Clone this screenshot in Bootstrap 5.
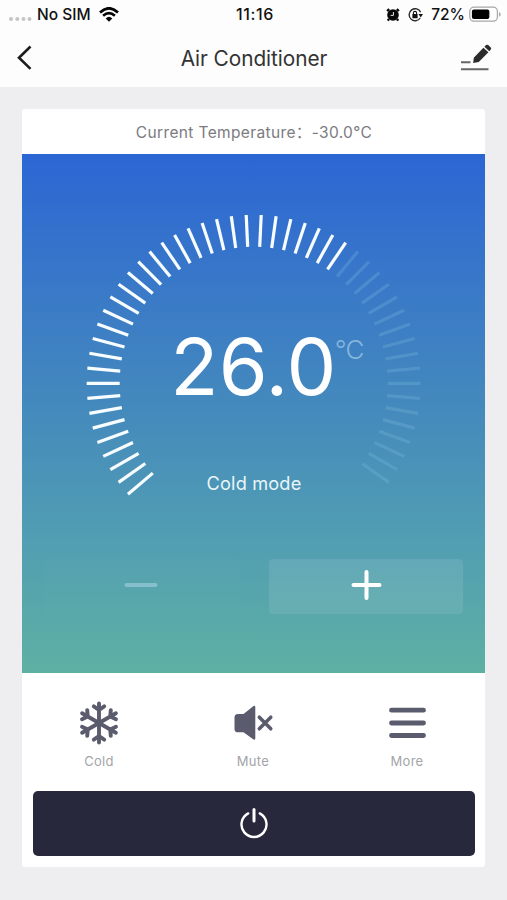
<!DOCTYPE html>
<html lang="en">
<head>
<meta charset="utf-8">
<meta name="viewport" content="width=device-width, initial-scale=1">
<title>Air Conditioner</title>
<link href="https://cdn.jsdelivr.net/npm/bootstrap@5.3.0/dist/css/bootstrap.min.css" rel="stylesheet">
<style>
body{font-family:Inter,"Noto Sans CJK SC",sans-serif;background:#eeeef0;height:900px;overflow:hidden;color:#111}
svg{display:block;flex:none}
.top-area{background:#fdfdfd;height:87px}
.status{height:29px;font-size:15.5px;font-weight:500;line-height:29px}
.status>div{flex:1 1 0}
.status-left{padding-left:9px}
.status-right{padding-right:6px}
.clock{letter-spacing:.6px;font-size:16px}
.title-bar{height:58px}
.title-text{font-size:20.8px;color:#333;line-height:59px;letter-spacing:-.05px;padding-left:1px}
.panel{margin:22px 22px 0;height:758px;width:463px;border-radius:3px;overflow:hidden}
.current{height:45px;font-size:15.5px;color:#7b7b80;line-height:47px;letter-spacing:.36px;padding-left:1px}
.screen{height:519px;background:linear-gradient(#2c66d4,#4489bd 48%,#529eb2 75%,#5eb0a3)}
.dial{display:grid;height:405px}
.dial>*{grid-area:1/1}
.reading{color:#fff;padding-top:165px}
.value{font-size:79px;line-height:95px;letter-spacing:.3px;font-weight:400}
.unit{font-size:26px;line-height:30px;color:#86b6de;margin:16px 0 0 -2px;font-weight:300;letter-spacing:-.6px}
.mode{font-size:18.2px;line-height:24px;color:#e9f5fa;margin-top:57px;letter-spacing:.15px;padding-left:1px}
.step-row{padding:0 22px;gap:30px}
.step{height:55px;border-radius:4px;border:0;padding-bottom:5px;background:rgba(255,255,255,.09)}
.step.dim{background:rgba(255,255,255,.012)}
.tools{height:118px;padding:28px 38px 0 37px}
.tool{width:80px;font-size:13px;color:#a3a4a9;line-height:18px;letter-spacing:.3px}
.tool svg{margin-bottom:7px}
.power{height:65px;width:442px;margin-left:11px;border:0;border-radius:5px;background:#28283d}
</style>
<script src="https://cdn.jsdelivr.net/npm/bootstrap@5.3.0/dist/js/bootstrap.bundle.min.js"></script>
</head>
<body>
<header class="top-area">
  <div class="status d-flex">
    <div class="status-left d-flex align-items-center">
      <svg width="24" height="29" fill="#c5c5c5"><circle cx="2" cy="19" r="2"/><circle cx="8.3" cy="19" r="2"/><circle cx="14.5" cy="19" r="2"/><circle cx="20.5" cy="19" r="2"/></svg>
      <span class="ms-1">No SIM</span>
      <svg class="ms-2" width="20" height="15" viewBox="0 0 20 15" fill="none" stroke="#050505" stroke-width="2.7"><path d="M1 5.4Q10-2.8 19 5.4M4.1 8.7Q10 3.7 15.9 8.7"/><path d="M6.7 11.4Q10 8.3 13.3 11.4L10 14.7Z" fill="#050505" stroke="none"/></svg>
    </div>
    <span class="clock">11:16</span>
    <div class="status-right d-flex align-items-center justify-content-end">
      <svg width="14" height="14" viewBox="0 0 14 14"><circle cx="7" cy="7" r="5.8" fill="#080808"/><path d="M1.200 3.200 3.200 1.200M12.800 3.200 10.800 1.200M3 11 1.800 12.600M11 11l1.200 1.600" stroke="#080808" stroke-width="2.400"/><path d="M7.400 4v3.400H4.600" fill="none" stroke="#fff" stroke-width=".9"/></svg>
      <svg class="mx-2" width="15" height="14" viewBox="0 0 15 14"><path d="M12.200 10A6 6 0 1 1 12.600 4.300" fill="none" stroke="#222" stroke-width="1.300"/><path d="M10.500 6H15L12.700 9.400Z" fill="#111"/><rect x="4.4" y="6.1" width="5.2" height="4.1" rx=".5" fill="#111"/><path d="M5.400 6.500V5a1.600 1.600 0 0 1 3.200 0v1.500" fill="none" stroke="#111" stroke-width="1.100"/></svg>
      <span>72%</span>
      <svg class="ms-1" width="32" height="17" viewBox="0 0 33 17"><rect x=".8" y="1" width="28.5" height="14.4" rx="4.3" fill="#fff" stroke="#a7a7a7" stroke-width="1.3"/><rect x="3" y="3.3" width="18" height="9.8" rx="2" fill="#000"/><path d="M31 6v4.800q1.800-1 1.800-2.400T31 6" fill="#aaa"/></svg>
    </div>
  </div>
  <div class="title-bar d-flex align-items-center justify-content-between">
    <svg width="60" height="58" fill="none" stroke="#1d1d1d" stroke-width="2.6"><path d="M30.500 17.500 19 28.700l11.500 11.200"/></svg>
    <span class="title-text">Air Conditioner</span>
    <svg width="60" height="58"><path d="M14 33.300h9.500M14 40.300h27.500" stroke="#666" stroke-width="1.900"/><path d="m26.200 33.900.6-5.200L36.400 18.700l5 4.600-9.600 9.800ZM37.400 17.700l1.700-1.600q1.100-.9 2.100 0l2.600 2.300q.9 1 0 2l-1.500 1.800Z" fill="#2b2b2b"/></svg>
  </div>
</header>
<main class="panel bg-white">
  <div class="current text-center">Current Temperature：-30.0°C</div>
  <section class="screen">
    <div class="dial">
      <svg id="ticks" width="463" height="405" viewBox="22 154 463 405" stroke-width="3.2"></svg>
      <div class="reading d-flex flex-column align-items-center">
        <div class="position-relative">
          <span class="value d-block">26.0</span>
          <span class="unit position-absolute top-0 start-100">°C</span>
        </div>
        <div class="mode">Cold mode</div>
      </div>
    </div>
    <div class="step-row d-flex">
      <button class="step dim flex-fill d-flex align-items-center justify-content-center" aria-label="Lower"><svg width="34" height="34"><path d="M2.500 17h29" stroke="#84bfcb" stroke-width="4" stroke-linecap="round"/></svg></button>
      <button class="step flex-fill d-flex align-items-center justify-content-center" aria-label="Raise"><svg width="34" height="34"><path d="M4.500 17h26M17.500 4v26" stroke="#fff" stroke-width="4" stroke-linecap="round"/></svg></button>
    </div>
  </section>
  <nav class="tools d-flex justify-content-between">
    <div class="tool d-flex flex-column align-items-center">
      <svg width="44" height="44" viewBox="-22 -22 44 44" fill="none" stroke="#5a5b6c" stroke-width="3.9" stroke-linecap="round" stroke-linejoin="round">
        <defs><path id="arm" d="M0 0V-19.500M-5.200-16.600 0-13 5.200-16.600"/></defs>
        <use href="#arm"/><use href="#arm" transform="rotate(60)"/><use href="#arm" transform="rotate(120)"/><use href="#arm" transform="rotate(180)"/><use href="#arm" transform="rotate(240)"/><use href="#arm" transform="rotate(300)"/>
      </svg>Cold
    </div>
    <div class="tool d-flex flex-column align-items-center">
      <svg width="44" height="44" viewBox="-.5 0 44 44" fill="#5a5b6c"><path d="M6.500 13H12L21.700 5.200q2.100-1.300 2.100 1v31q0 2.300-2.100 1L12 31.300H6.500q-3.500 0-3.500-3.400V16.500Q3 13 6.500 13Z"/><path d="m27.800 16.200 11.500 11.600m0-11.600L27.800 27.800" stroke="#5a5b6c" stroke-width="3.500" stroke-linecap="round"/></svg>Mute
    </div>
    <div class="tool d-flex flex-column align-items-center">
      <svg width="44" height="44" viewBox="-.5 0 44 44" stroke="#5a5b6c" stroke-width="4.8" stroke-linecap="round"><path d="M6 9.200h32M6 22h32M6 34.500h32"/></svg>More
    </div>
  </nav>
  <button class="power d-flex align-items-center justify-content-center" aria-label="Power">
    <svg width="32" height="34" viewBox="0 1 32 34" fill="none" stroke="#fff" stroke-linecap="round"><path d="M10.200 7.400A12.500 12.500 0 1 0 21.800 7.400" stroke-width="2.4"/><path d="M16 3.500v11.500" stroke-width="3"/></svg>
  </button>
</main>
<script>
// Dial ticks: 70 per full turn, offset half a step from the top.
const dial = document.getElementById('ticks');
const cx = 253.7, cy = 383.3, outerX = 167, outerY = 168.5, innerX = 134, innerY = 136.5;
for (let i = -26; i < 25; i++) {
  const a = (i + 0.5) * 2 * Math.PI / 70;
  const line = document.createElementNS('http://www.w3.org/2000/svg', 'line');
  line.setAttribute('x1', cx + innerX * Math.sin(a));
  line.setAttribute('y1', cy - innerY * Math.cos(a));
  line.setAttribute('x2', cx + outerX * Math.sin(a));
  line.setAttribute('y2', cy - outerY * Math.cos(a));
  line.setAttribute('stroke', i < 7 ? '#f7fcff' : 'rgba(130,195,225,.26)');
  dial.appendChild(line);
}
</script>
</body>
</html>
